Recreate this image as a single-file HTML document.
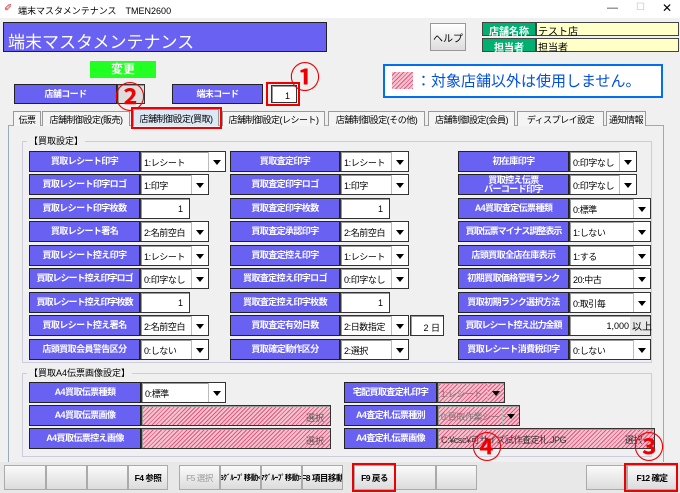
<!DOCTYPE html>
<html><head><meta charset="utf-8">
<style>
*{box-sizing:border-box;margin:0;padding:0}
body{width:680px;height:493px;background:#f0f0f0;font-family:"Liberation Sans","Noto Sans CJK JP",sans-serif;position:relative;overflow:hidden;font-size:10px}
.a{position:absolute}
.lb{position:absolute;background:#6861f2;border:1px solid #222;color:#fff;font-weight:bold;font-size:9px;letter-spacing:-0.6px;display:flex;align-items:center;justify-content:center;text-align:center;line-height:9px;height:21px;white-space:nowrap;overflow:hidden}
.cb{position:absolute;background:#fff;border:1px solid #333;box-shadow:inset 1px 1px 0 #999;height:21px;font-size:9px;padding:4px 0 0 3px;white-space:nowrap;overflow:hidden;letter-spacing:-0.4px}
.cb::after{content:"";position:absolute;right:0;top:0;width:16px;height:19px;border-left:1px solid #bbb;background:#fff}
.cb i{position:absolute;right:4px;top:8px;width:0;height:0;border-left:4px solid transparent;border-right:4px solid transparent;border-top:5px solid #000;z-index:2}
.in{position:absolute;background:#fff;border:1px solid #333;box-shadow:inset 1px 1px 0 #999;height:21px;font-size:9px;text-align:right;padding:5px 6px 0 0;white-space:nowrap}
.h{background:repeating-linear-gradient(135deg,#f6c2cf 0 2px,#dc5a7c 2px 3px)!important;color:#777}
.h::after{background:transparent!important}
.fb{position:absolute;top:465px;height:25px;background:linear-gradient(#fafafa,#dcdcdc);border:1px solid #aaa;font-size:8.5px;font-weight:bold;display:flex;align-items:center;justify-content:center;white-space:nowrap;letter-spacing:-0.5px;overflow:hidden}
.circ{position:absolute;color:#e00;font-size:30px;font-weight:bold;line-height:30px}
.red{position:absolute;border:2px solid #e00}
.tab{position:absolute;top:111px;height:15px;border:1px solid #999;border-bottom:none;background:#f4f4f4;font-size:9px;letter-spacing:-0.5px;display:flex;align-items:center;justify-content:center;white-space:nowrap;overflow:hidden}
</style></head><body>
<div class="a" style="left:0;top:0;width:680px;height:18px;background:#fff"></div>
<div class="a" style="left:4px;top:3px;color:#c22;font-size:10px">✐</div>
<div class="a" style="left:18px;top:4px;font-size:9px">端末マスタメンテナンス　TMEN2600</div>
<div class="a" style="left:607px;top:2px;font-size:11px;color:#333">—</div>
<div class="a" style="left:636px;top:2px;font-size:10px;color:#bbb">☐</div>
<div class="a" style="left:662px;top:1px;font-size:12px">✕</div>

<div class="a" style="left:3px;top:22px;width:324px;height:30px;background:#6861f2;border:1px solid #222;color:#fff;font-size:17px;padding:5px 0 0 4px">端末マスタメンテナンス</div>
<div class="a" style="left:430px;top:23px;width:36px;height:28px;border:1px solid #999;background:linear-gradient(#fff,#ddd);font-size:10px;display:flex;align-items:center;justify-content:center">ヘルプ</div>
<div class="a" style="left:482px;top:22px;width:54px;height:14px;background:#00b070;border:1px solid #444;color:#fff;font-size:10px;font-weight:bold;text-align:center">店舗名称</div>
<div class="a" style="left:536px;top:22px;width:143px;height:14px;background:#ffffc8;border:1px solid #444;font-size:10px;padding-left:1px">テスト店</div>
<div class="a" style="left:482px;top:38px;width:54px;height:14px;background:#00b070;border:1px solid #444;color:#fff;font-size:10px;font-weight:bold;text-align:center">担当者</div>
<div class="a" style="left:536px;top:38px;width:143px;height:14px;background:#ffffc8;border:1px solid #444;font-size:10px;padding-left:1px">担当者</div>

<div class="a" style="left:90px;top:61px;width:66px;height:17px;background:#22ff22;color:#fff;font-size:12px;font-weight:bold;text-align:center;line-height:17px">変更</div>
<div class="lb" style="left:14px;top:84px;width:103px;height:20px">店舗コード</div>
<div class="in" style="left:117px;top:84px;width:28px;height:20px;background:#ddd"></div>
<div class="lb" style="left:172px;top:84px;width:91px;height:20px">端末コード</div>
<div class="in" style="left:271px;top:85px;width:26px;height:18px">1</div>
<div class="red" style="left:266px;top:82px;width:34px;height:24px"></div>
<div class="circ" style="left:290px;top:64px">①</div>
<div class="circ" style="left:115px;top:84px">②</div>

<div class="a" style="left:383px;top:64px;width:280px;height:34px;border:2px solid #0070f0;background:#fff"></div>
<div class="a h" style="left:392px;top:72px;width:21px;height:17px"></div>
<div class="a" style="left:416px;top:70px;color:#0050e0;font-size:15px">：対象店舗以外は使用しません。</div>

<div class="a" style="left:8px;top:125px;width:656px;height:338px;border:1px solid #9ab;background:#f0f0f0"></div>
<div class="tab" style="left:13px;width:28px">伝票</div>
<div class="tab" style="left:42px;width:88px">店舗制御設定(販売)</div>
<div class="tab" style="left:133px;width:86px;background:#dce8f4;top:109px;height:17px">店舗制御設定(買取)</div>
<div class="red" style="left:131px;top:107px;width:91px;height:22px"></div>
<div class="tab" style="left:222px;width:103px">店舗制御設定(レシート)</div>
<div class="tab" style="left:328px;width:97px">店舗制御設定(その他)</div>
<div class="tab" style="left:428px;width:87px">店舗制御設定(会員)</div>
<div class="tab" style="left:517px;width:87px">ディスプレイ設定</div>
<div class="tab" style="left:606px;width:40px">通知情報</div>

<div class="a" style="left:22px;top:141px;width:630px;height:222px;border:1px solid #ccd"></div>
<div class="a" style="left:27px;top:134px;background:#f0f0f0;font-size:9px;padding:0 2px">【買取設定】</div>

<div class="lb" style="left:29px;top:151px;width:111px">買取レシート印字</div><div class="cb" style="left:140px;top:151px;width:86px">1:レシート<i></i></div>
<div class="lb" style="left:29px;top:174px;width:111px">買取レシート印字ロゴ</div><div class="cb" style="left:140px;top:174px;width:69px">1:印字<i></i></div>
<div class="lb" style="left:29px;top:198px;width:111px">買取レシート印字枚数</div><div class="in" style="left:140px;top:198px;width:50px">1</div>
<div class="lb" style="left:29px;top:221px;width:111px">買取レシート署名</div><div class="cb" style="left:140px;top:221px;width:69px">2:名前空白<i></i></div>
<div class="lb" style="left:29px;top:245px;width:111px">買取レシート控え印字</div><div class="cb" style="left:140px;top:245px;width:69px">1:レシート<i></i></div>
<div class="lb" style="left:29px;top:268px;width:111px;letter-spacing:-1px">買取レシート控え印字ロゴ</div><div class="cb" style="left:140px;top:268px;width:69px">0:印字なし<i></i></div>
<div class="lb" style="left:29px;top:292px;width:111px;letter-spacing:-1px">買取レシート控え印字枚数</div><div class="in" style="left:140px;top:292px;width:50px">1</div>
<div class="lb" style="left:29px;top:315px;width:111px">買取レシート控え署名</div><div class="cb" style="left:140px;top:315px;width:69px">2:名前空白<i></i></div>
<div class="lb" style="left:29px;top:339px;width:111px">店頭買取会員警告区分</div><div class="cb" style="left:140px;top:339px;width:69px">0:しない<i></i></div>

<div class="lb" style="left:230px;top:151px;width:110px">買取査定印字</div><div class="cb" style="left:340px;top:151px;width:69px">1:レシート<i></i></div>
<div class="lb" style="left:230px;top:174px;width:110px">買取査定印字ロゴ</div><div class="cb" style="left:340px;top:174px;width:69px">1:印字<i></i></div>
<div class="lb" style="left:230px;top:198px;width:110px">買取査定印字枚数</div><div class="in" style="left:340px;top:198px;width:50px">1</div>
<div class="lb" style="left:230px;top:221px;width:110px">買取査定承認印字</div><div class="cb" style="left:340px;top:221px;width:69px">2:名前空白<i></i></div>
<div class="lb" style="left:230px;top:245px;width:110px">買取査定控え印字</div><div class="cb" style="left:340px;top:245px;width:69px">1:レシート<i></i></div>
<div class="lb" style="left:230px;top:268px;width:110px">買取査定控え印字ロゴ</div><div class="cb" style="left:340px;top:268px;width:69px">0:印字なし<i></i></div>
<div class="lb" style="left:230px;top:292px;width:110px">買取査定控え印字枚数</div><div class="in" style="left:340px;top:292px;width:50px">1</div>
<div class="lb" style="left:230px;top:315px;width:110px">買取査定有効日数</div><div class="cb" style="left:340px;top:315px;width:69px">2:日数指定<i></i></div><div class="in" style="left:410px;top:315px;width:34px;padding-right:3px">2 日</div>
<div class="lb" style="left:230px;top:339px;width:110px">買取確定動作区分</div><div class="cb" style="left:340px;top:339px;width:69px">2:選択<i></i></div>

<div class="lb" style="left:458px;top:151px;width:111px">初在庫印字</div><div class="cb" style="left:569px;top:151px;width:68px">0:印字なし<i></i></div>
<div class="lb" style="left:458px;top:174px;width:111px;flex-direction:column">買取控え伝票<br>バーコード印字</div><div class="cb" style="left:569px;top:174px;width:68px">0:印字なし<i></i></div>
<div class="lb" style="left:458px;top:198px;width:111px">A4買取査定伝票種類</div><div class="cb" style="left:569px;top:198px;width:82px">0:標準<i></i></div>
<div class="lb" style="left:458px;top:221px;width:111px;letter-spacing:-1px">買取伝票マイナス調整表示</div><div class="cb" style="left:569px;top:221px;width:82px">1:しない<i></i></div>
<div class="lb" style="left:458px;top:245px;width:111px">店頭買取全店在庫表示</div><div class="cb" style="left:569px;top:245px;width:82px">1:する<i></i></div>
<div class="lb" style="left:458px;top:268px;width:111px">初期買取価格管理ランク</div><div class="cb" style="left:569px;top:268px;width:82px">20:中古<i></i></div>
<div class="lb" style="left:458px;top:292px;width:111px">買取初期ランク選択方法</div><div class="cb" style="left:569px;top:292px;width:82px">0:取引毎<i></i></div>
<div class="lb" style="left:458px;top:315px;width:111px;letter-spacing:-1px">買取レシート控え出力金額</div><div class="in" style="left:569px;top:315px;width:82px;padding-right:21px;background:linear-gradient(90deg,#fff 75%,#e8e8e8 75%)">1,000</div><div class="a" style="left:632px;top:318px;font-size:10px">以上</div>
<div class="lb" style="left:458px;top:339px;width:111px">買取レシート消費税印字</div><div class="cb" style="left:569px;top:339px;width:82px">0:しない<i></i></div>

<div class="a" style="left:22px;top:373px;width:630px;height:84px;border:1px solid #ccd"></div>
<div class="a" style="left:27px;top:366px;background:#f0f0f0;font-size:9px;padding:0 2px">【買取A4伝票画像設定】</div>
<div class="lb" style="left:29px;top:382px;width:112px">A4買取伝票種類</div><div class="cb" style="left:141px;top:382px;width:85px">0:標準<i></i></div>
<div class="lb" style="left:29px;top:405px;width:112px">A4買取伝票画像</div><div class="in h" style="left:141px;top:405px;width:190px;color:#555">選択</div>
<div class="lb" style="left:29px;top:428px;width:112px">A4買取伝票控え画像</div><div class="in h" style="left:141px;top:428px;width:190px;color:#555">選択</div>
<div class="lb" style="left:344px;top:382px;width:93px">宅配買取査定札印字</div><div class="cb h" style="left:437px;top:382px;width:68px">1:レシート<i></i></div>
<div class="lb" style="left:344px;top:405px;width:93px">A4査定札伝票種別</div><div class="cb h" style="left:437px;top:405px;width:83px">0:買取作業シート<i></i></div>
<div class="lb" style="left:344px;top:428px;width:93px">A4査定札伝票画像</div><div class="cb h" style="left:437px;top:428px;width:218px;color:#333">C:¥csc¥可サイズ試作査定札.JPG<span style="position:absolute;right:12px;top:4px">選択</span></div>

<div class="a" style="left:0;top:462px;width:680px;height:31px;background:#e8e8e8"></div>
<div class="fb" style="left:4px;width:42px"></div>
<div class="fb" style="left:46px;width:41px"></div>
<div class="fb" style="left:87px;width:41px"></div>
<div class="fb" style="left:128px;width:40px">F4 参照</div>
<div class="fb" style="left:179px;width:41px;color:#999;font-weight:normal">F5 選択</div>
<div class="fb" style="left:220px;width:41px;font-size:7.5px">F6ｸﾞﾙｰﾌﾟ移動&lt;&lt;</div>
<div class="fb" style="left:261px;width:41px;font-size:7.5px">F7ｸﾞﾙｰﾌﾟ移動&gt;&gt;</div>
<div class="fb" style="left:302px;width:41px">F8 項目移動</div>
<div class="fb" style="left:354px;width:41px">F9 戻る</div>
<div class="fb" style="left:395px;width:41px"></div>
<div class="fb" style="left:436px;width:41px"></div>
<div class="fb" style="left:586px;width:41px"></div>
<div class="fb" style="left:627px;width:50px">F12 確定</div>
<div class="red" style="left:352px;top:463px;width:44px;height:29px"></div>
<div class="red" style="left:624px;top:463px;width:54px;height:29px"></div>
<div class="circ" style="left:472px;top:434px">④</div>
<div class="circ" style="left:634px;top:434px">③</div>
</body></html>
